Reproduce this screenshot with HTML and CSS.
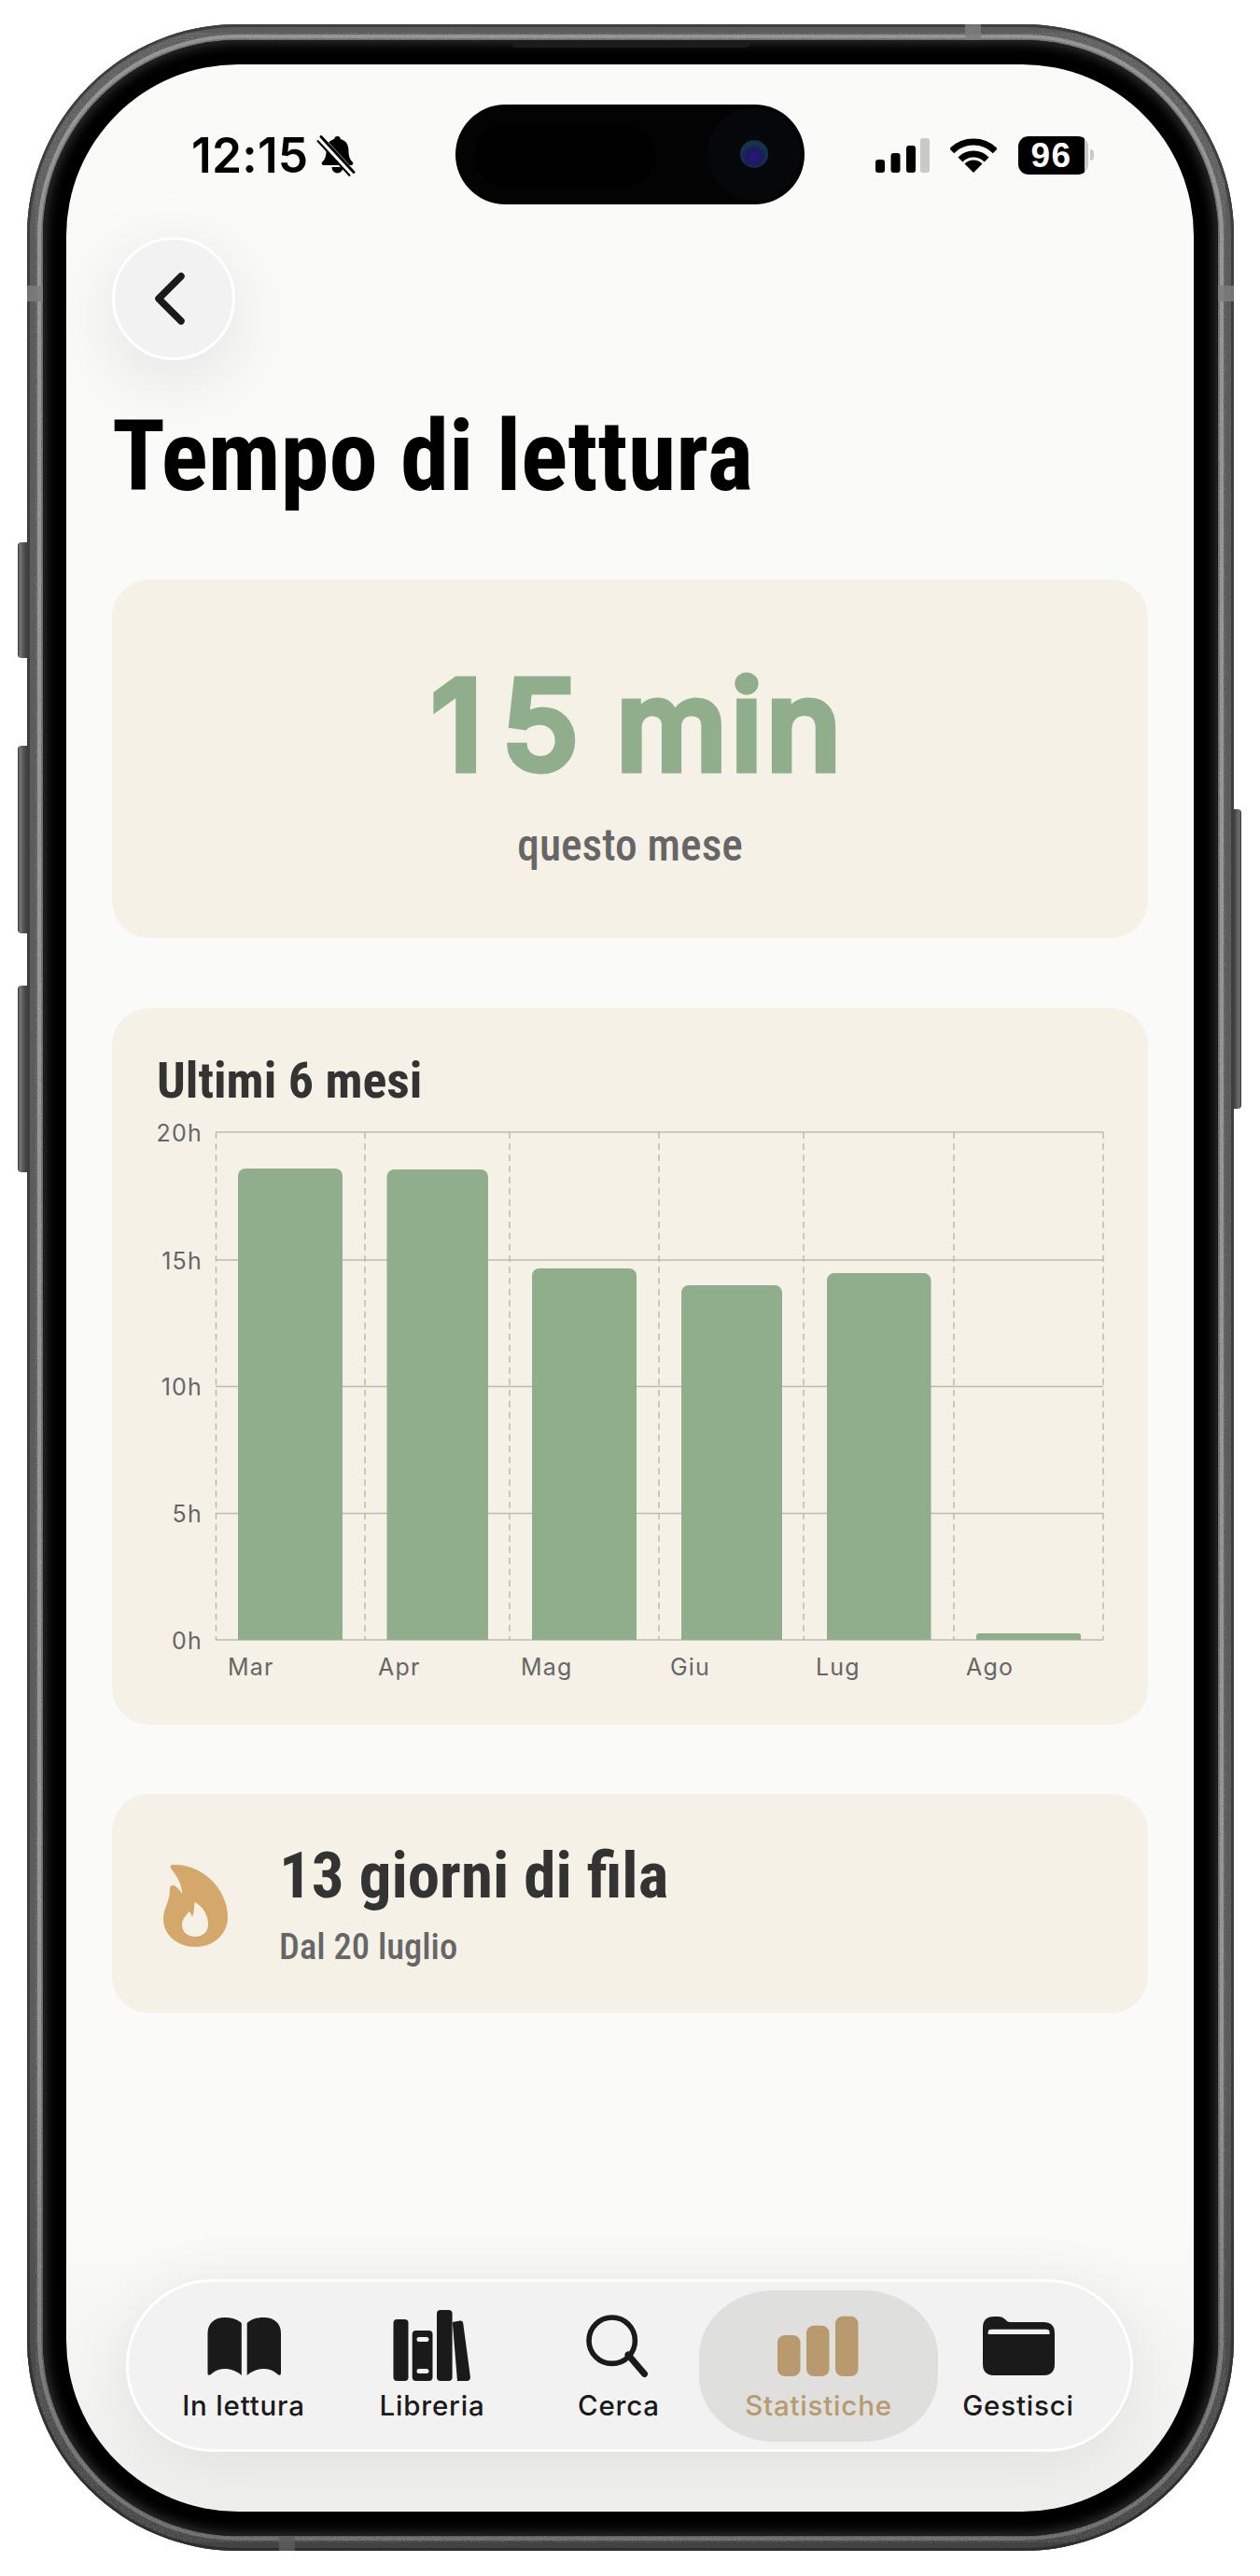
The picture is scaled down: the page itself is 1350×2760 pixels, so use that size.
FILE: index.html
```html
<!DOCTYPE html>
<html lang="it">
<head>
<meta charset="utf-8">
<title>Tempo di lettura</title>
<link rel="stylesheet" href="styles.css">
</head>
<body>
<div class="phone">
  <svg class="grain" width="1293" height="2707" viewBox="0 0 1293 2707" aria-hidden="true">
    <defs>
      <filter id="noise" x="0" y="0" width="100%" height="100%">
        <feTurbulence type="fractalNoise" baseFrequency="0.85" numOctaves="2" seed="4"/>
        <feColorMatrix type="matrix" values="0 0 0 0 1  0 0 0 0 1  0 0 0 0 1  1.6 0 0 0 -0.62"/>
        <feComposite in2="SourceAlpha" operator="in"/>
      </filter>
    </defs>
    <rect x="9" y="9" width="1275" height="2689" rx="218" fill="none" stroke="#000" stroke-width="14" filter="url(#noise)"/>
  </svg>
  <span class="side side-silent"></span>
  <span class="side side-up"></span>
  <span class="side side-down"></span>
  <span class="side side-power"></span>
  <span class="band band-top"></span>
  <span class="band band-left"></span>
  <span class="band band-right"></span>
  <span class="band band-bottom"></span>
  <div class="bezel">
    <span class="speaker"></span>
    <main class="screen">
      <div class="island">
        <span class="island-sensor"></span>
        <span class="island-cam"><span class="island-lens"></span></span>
      </div>
      <header class="status">
        <div class="status-left">
          <span class="clock">12:15</span>
          <svg class="bell" width="37" height="41" viewBox="0 0 37 41" aria-hidden="true">
            <path d="M18.5 1c2 0 3.2 1.2 3.4 3 5.6 1.4 8.6 6 8.6 12.4 0 6.400 1.600 9.500 4.200 12.100 1.200 1.200.6 3.500-1.300 3.500H3.600c-1.900 0-2.500-2.300-1.300-3.500 2.600-2.600 4.200-5.700 4.200-12.100C6.500 10 9.500 5.400 15.100 4c.2-1.800 1.400-3 3.400-3z"/>
            <path d="M12.500 34h12c0 3.500-2.500 6.500-6 6.500s-6-3-6-6.500z"/>
            <path d="M-1 2.500 34 40.500" stroke="#fafaf8" stroke-width="8" fill="none"/>
            <path d="M1 1.500 36 39.500" stroke="#000" stroke-width="3" stroke-linecap="round" fill="none"/>
            <path d="M-3 5.500 32 43.500" stroke="#000" stroke-width="2" fill="none"/>
          </svg>
        </div>
        <div class="status-right">
          <svg class="signal" width="58" height="37" viewBox="0 0 58 37" aria-hidden="true">
            <rect x="0" y="23" width="10" height="14" rx="3"/>
            <rect x="16.500" y="16" width="10" height="21" rx="3"/>
            <rect x="33" y="8" width="10" height="29" rx="3"/>
            <rect x="48" y="0" width="10" height="37" rx="3" class="signal-off"/>
          </svg>
          <svg class="wifi" width="50" height="37" viewBox="0 0 50 37" aria-hidden="true">
            <path d="M1.700 13.700a33 33 0 0 1 46.600 0" fill="none" stroke="#000" stroke-width="7"/>
            <path d="M10.900 22.900a20 20 0 0 1 28.200 0" fill="none" stroke="#000" stroke-width="7"/>
            <path d="M25 37 15.500 27.500a13.500 13.500 0 0 1 19 0z"/>
          </svg>
          <div class="battery">
            <span class="battery-body">96</span>
            <span class="battery-nub"></span>
          </div>
        </div>
      </header>

      <button class="back" type="button" aria-label="Indietro">
        <svg width="44" height="66" viewBox="0 0 44 66" aria-hidden="true">
          <path d="M30 9 6 33l24 24" fill="none" stroke="#1a1a1a" stroke-width="7.500" stroke-linecap="round" stroke-linejoin="round"/>
        </svg>
      </button>

      <h1 class="title">Tempo di lettura</h1>

      <section class="card card-total">
        <div class="total-value"><span class="total-one">1</span>5 min</div>
        <div class="total-label">questo mese</div>
      </section>

      <section class="card card-chart">
        <h2 class="chart-title">Ultimi 6 mesi</h2>
        <svg class="chart" width="1110" height="648" viewBox="120 1200 1110 648" role="img" aria-label="Ultimi 6 mesi">
          <g class="grid-h">
            <path d="M231 1213H1182M231 1350H1182M231 1485.500H1182M231 1621.500H1182M231 1757H1182"/>
          </g>
          <g class="grid-v">
            <path d="M231.500 1213V1757M391 1213V1757M546 1213V1757M706 1213V1757M861 1213V1757M1022 1213V1757M1182 1213V1757"/>
          </g>
          <g class="bars">
            <path d="M255 1757V1260a8 8 0 0 1 8-8H359a8 8 0 0 1 8 8V1757z"/>
            <path d="M414.500 1757V1261a8 8 0 0 1 8-8H515a8 8 0 0 1 8 8V1757z"/>
            <path d="M570 1757V1367a8 8 0 0 1 8-8H674a8 8 0 0 1 8 8V1757z"/>
            <path d="M730 1757V1385a8 8 0 0 1 8-8H830a8 8 0 0 1 8 8V1757z"/>
            <path d="M886 1757V1372a8 8 0 0 1 8-8H989.500a8 8 0 0 1 8 8V1757z"/>
            <path d="M1046 1757V1753a3 3 0 0 1 3-3H1155a3 3 0 0 1 3 3V1757z"/>
          </g>
          <g class="axis-y">
            <text x="217" y="1223">20h</text>
            <text x="217" y="1360">15h</text>
            <text x="217" y="1495">10h</text>
            <text x="217" y="1631">5h</text>
            <text x="217" y="1767">0h</text>
          </g>
          <g class="axis-x">
            <text x="244" y="1795">Mar</text>
            <text x="405" y="1795">Apr</text>
            <text x="558" y="1795">Mag</text>
            <text x="718" y="1795">Giu</text>
            <text x="874" y="1795">Lug</text>
            <text x="1035" y="1795">Ago</text>
          </g>
        </svg>
      </section>

      <section class="card card-streak">
        <svg class="flame" width="69" height="89" viewBox="0 0 69 89" aria-hidden="true">
          <path fill-rule="evenodd" d="M10 1C26 0 43 7 55 21 65 33 69 46 69 57 69 75 54 89 35 89 15 89 0 76 0 59 0 47 7 42 7 27 7 23 10 22 13 24 16 26 18 29 20 32 20 22 15 14 9 6 7 3 7 1 10 1zM33.500 41C33 47 33 53 31 57 30 54 29 52 27.500 51 25 55 20 59 20 65 20 73 26 78 34 78 42 78 48 73 48 65 48 54 42 45 33.500 41z"/>
        </svg>
        <div class="streak-text">
          <div class="streak-title">13 giorni di fila</div>
          <div class="streak-sub">Dal 20 luglio</div>
        </div>
      </section>

      <nav class="tabs">
        <a class="tab tab-reading">
          <svg width="90" height="76" viewBox="0 0 90 76" aria-hidden="true">
            <path d="M6.500 25C6.500 14 14 8 25 8c8 0 13.500 2 17.800 6v56c-5.800-5-11.800-7-17.800-7-6 0-11 2-15 6-2 1.500-3.500 1-3.500-2z"/>
            <path d="M85 25C85 14 77.500 8 66.500 8c-8 0-13.500 2-17.800 6v56c5.800-5 11.800-7 17.800-7 6 0 11 2 15 6 2 1.500 3.500 1 3.500-2z"/>
          </svg>
          <span>In lettura</span>
        </a>
        <a class="tab tab-library">
          <svg width="90" height="76" viewBox="0 0 90 76" aria-hidden="true">
            <rect x="3.500" y="10" width="16" height="66" rx="4"/>
            <path fill-rule="evenodd" d="M27.700 22H41.500a4 4 0 0 1 4 4V72a4 4 0 0 1-4 4H27.700a4 4 0 0 1-4-4V26a4 4 0 0 1 4-4zM31 29a2 2 0 0 0 0 5H39a2 2 0 0 0 0-5zM31 63a2 2 0 0 0 0 5H39a2 2 0 0 0 0-5z"/>
            <rect x="50" y="0" width="16.600" height="76" rx="4"/>
            <path d="M66.800 13 75 11.500c1.800-.3 3 .8 3.200 2.500L85.900 71.500c.3 2.500-1 4.500-3.500 4.500H72z"/>
          </svg>
          <span>Libreria</span>
        </a>
        <a class="tab tab-search">
          <svg width="90" height="76" viewBox="0 0 90 76" aria-hidden="true">
            <circle cx="37.700" cy="32.700" r="24.700" fill="none" stroke="#1a1a1a" stroke-width="5.600"/>
            <path d="M55 48 72.500 68.500" fill="none" stroke="#1a1a1a" stroke-width="7" stroke-linecap="round"/>
          </svg>
          <span>Cerca</span>
        </a>
        <a class="tab tab-stats is-active">
          <svg width="90" height="76" viewBox="0 0 90 76" aria-hidden="true">
            <rect x="1" y="27" width="24.500" height="44" rx="8"/>
            <rect x="32" y="16.700" width="24.500" height="54.300" rx="8"/>
            <rect x="63" y="6.700" width="24.500" height="64.300" rx="8"/>
          </svg>
          <span>Statistiche</span>
        </a>
        <a class="tab tab-manage">
          <svg width="90" height="76" viewBox="0 0 90 76" aria-hidden="true">
            <path fill-rule="evenodd" d="M7 19Q7 7 19 7H24Q28 7 31 10L33 12Q34 13 37 13H72Q84 13 84 25V58Q84 70 72 70H19Q7 70 7 58zM16 20.700Q12.600 20.700 12.600 24V26H78.500V24Q78.500 20.700 75 20.700z"/>
          </svg>
          <span>Gestisci</span>
        </a>
      </nav>
    </main>
  </div>
</div>
</body>
</html>
```

FILE: styles.css
```css
* { box-sizing: border-box; }
html, body { margin: 0; padding: 0; background: #fff; }
body { width: 1350px; height: 2760px; overflow: hidden; font-family: "Inter", "Liberation Sans", sans-serif; }

.phone {
  position: relative;
  width: 1293px;
  height: 2707px;
  margin: 26px 0 0 29px;
  padding: 17px 17px 16px 17px;
  border-radius: 226px;
  background: #6e6e6e;
  box-shadow: inset 0 0 0 3px #3f3f3f, inset 0 0 0 11px #5c5c5c, inset 0 0 0 15px #8f8f8f;
}
.phone::before {
  content: "";
  position: absolute;
  inset: 0;
  border-radius: 226px;
  background: linear-gradient(180deg, rgba(0, 0, 0, 0) 0, rgba(0, 0, 0, 0) 80%, rgba(0, 0, 0, .28) 100%);
}
.grain { position: absolute; left: 0; top: 0; opacity: .28; pointer-events: none; }

.side {
  position: absolute;
  width: 10px;
  background: linear-gradient(90deg, #3a3a3a 0, #777 25%, #555 60%, #3e3e3e 100%);
  border-radius: 4px 0 0 4px;
}
.side-silent { left: -10px; top: 555px; height: 124px; }
.side-up { left: -10px; top: 773px; height: 201px; }
.side-down { left: -10px; top: 1030px; height: 200px; }
.side-power { right: -8px; width: 8px; top: 841px; height: 321px; border-radius: 0 4px 4px 0; background: linear-gradient(270deg, #3a3a3a 0, #6f6f6f 30%, #555 70%, #3e3e3e 100%); }

.band { position: absolute; background: #7d7d7d; opacity: .85; }
.band-top { left: 1005px; top: 0; width: 17px; height: 17px; }
.band-left { left: 0; top: 280px; width: 17px; height: 17px; }
.band-right { right: 0; top: 280px; width: 17px; height: 17px; }
.band-bottom { left: 270px; bottom: 0; width: 17px; height: 16px; background: #5c5c5c; }

.bezel {
  position: relative;
  height: 100%;
  padding: 26px 26px 26px 25px;
  border-radius: 209px;
  background: #000;
  box-shadow: inset 0 0 0 1px #1c1c1c, inset 0 0 14px 2px #3a3a3a;
}
.speaker { position: absolute; left: 501px; top: 0; width: 257px; height: 8px; border-radius: 0 0 6px 6px; background: #1c1c1c; }

.screen {
  position: relative;
  display: flex;
  flex-direction: column;
  height: 100%;
  border-radius: 184px;
  overflow: hidden;
  background: linear-gradient(180deg, #fafaf8 0, #fafaf8 88%, #efefed 100%);
}

.island { position: absolute; left: 417px; top: 43px; width: 374px; height: 107px; border-radius: 54px; background: #030303; }
.island-sensor { position: absolute; left: 21px; top: 22px; width: 194px; height: 65px; border-radius: 32px; background: #000; }
.island-cam { position: absolute; left: 270px; top: 3px; width: 100px; height: 100px; border-radius: 50%; background: #05070a; display: flex; align-items: center; justify-content: center; }
.island-lens { width: 30px; height: 30px; border-radius: 50%; background: radial-gradient(circle at 50% 60%, #2a1780 0, #1c1a5e 35%, #153848 65%, #0a1014 100%); }

.status { display: flex; justify-content: space-between; align-items: center; height: 50px; margin-top: 72px; padding: 0 107px 0 134px; flex: none; }
.status-left { display: flex; align-items: center; gap: 13px; }
.clock { font-size: 51.500px; line-height: 50px; font-weight: 600; color: #000; letter-spacing: .2px; }
.bell { fill: #000; overflow: visible; margin-top: -2px; }
.status-right { display: flex; align-items: center; gap: 22px; }
.signal { fill: #000; margin-right: 0; }
.signal .signal-off { fill: #c9c9c7; }
.wifi { fill: #000; margin-left: 0; }
.battery { display: flex; align-items: center; margin-left: 1px; gap: 2px; }
.battery-body {
  display: block;
  width: 75px;
  height: 41px;
  padding-right: 4px;
  border-radius: 11px;
  background: linear-gradient(90deg, #000 0, #000 95%, #c9c9c7 95%, #c9c9c7 100%);
  color: #fff;
  font-family: "Liberation Sans", sans-serif;
  font-weight: 700;
  font-size: 37px;
  line-height: 41px;
  text-align: center;
  letter-spacing: 1.500px;
}
.battery-nub { display: block; width: 4px; height: 12px; border-radius: 0 4px 4px 0; background: #c9c9c7; }

.back {
  display: flex;
  align-items: center;
  justify-content: center;
  flex: none;
  width: 132px;
  height: 132px;
  margin: 63px 0 0 49px;
  padding: 0;
  border: 3px solid #fff;
  border-radius: 50%;
  background: #f2f2f2;
  box-shadow: 0 20px 80px rgba(0, 0, 0, .1);
}

.title, .total-label, .chart-title, .streak-title, .streak-sub {
  font-family: "Roboto", "Liberation Sans", sans-serif;
  font-stretch: 75%;
}
.title { flex: none; margin: 44px 0 0 49px; font-size: 105px; line-height: 120px; font-weight: 700; color: #000; }

.card { flex: none; margin: 0 49px 0 49px; width: 1110px; border-radius: 40px; background: #f5f1e6; }
.card-total { height: 384px; margin-top: 71px; text-align: center; }
.total-value { padding: 75px 0 0 17px; font-size: 134px; line-height: 160px; font-weight: 500; color: #90ae8c; -webkit-text-stroke: 7px #90ae8c; letter-spacing: 4px; word-spacing: -4px; }
.total-one { margin-right: 16px; }
.total-label { margin-top: 22px; font-size: 47.500px; line-height: 56px; font-weight: 500; color: #666; }

.card-chart { height: 768px; margin-top: 75px; }
.chart-title { height: 120px; margin: 0; padding: 46px 0 0 48px; font-size: 54px; line-height: 64px; font-weight: 700; color: #333; }
.chart { display: block; }
.grid-h path { stroke: #bcbab3; stroke-width: 1.5; fill: none; }
.grid-v path { stroke: #bcbab3; stroke-width: 1.5; stroke-dasharray: 7 5; fill: none; }
.bars path { fill: #90ae8c; }
.axis-y text, .axis-x text { font-family: "Inter", "Liberation Sans", sans-serif; font-size: 25px; fill: #666; letter-spacing: 1.200px; }
.axis-y text { text-anchor: end; }

.card-streak { display: flex; align-items: center; height: 235px; margin-top: 74px; padding-left: 55px; }
.flame { fill: #d4a76a; flex: none; margin-top: 4px; }
.streak-text { margin-left: 55px; }
.streak-title { margin-top: 0; font-size: 69px; line-height: 80px; font-weight: 700; color: #333; }
.streak-sub { margin-top: 12px; font-size: 38.600px; line-height: 48px; font-weight: 500; color: #666; }

.tabs {
  display: flex;
  flex: none;
  align-items: flex-start;
  width: 1079px;
  height: 185px;
  margin: auto 0 64px 64px;
  padding: 9px 0 0 37px;
  border: 3px solid #fff;
  border-radius: 92px;
  background: #f2f2f2;
  box-shadow: 0 10px 70px rgba(0, 0, 0, .08);
}
.tab { display: flex; flex-direction: column; align-items: center; flex: none; width: 172px; height: 162px; padding-top: 21px; color: #1a1a1a; fill: #1a1a1a; }
.tab span { margin-top: 8px; font-size: 29.500px; line-height: 36px; font-weight: 500; letter-spacing: .8px; white-space: nowrap; }
.tab-library { margin-left: 30px; }
.tab-search { margin-left: 28px; }
.tab-stats { width: 256px; border-radius: 81px / 70px; background: #dfdfdd; color: #b89a6e; fill: #b89a6e; }
```
